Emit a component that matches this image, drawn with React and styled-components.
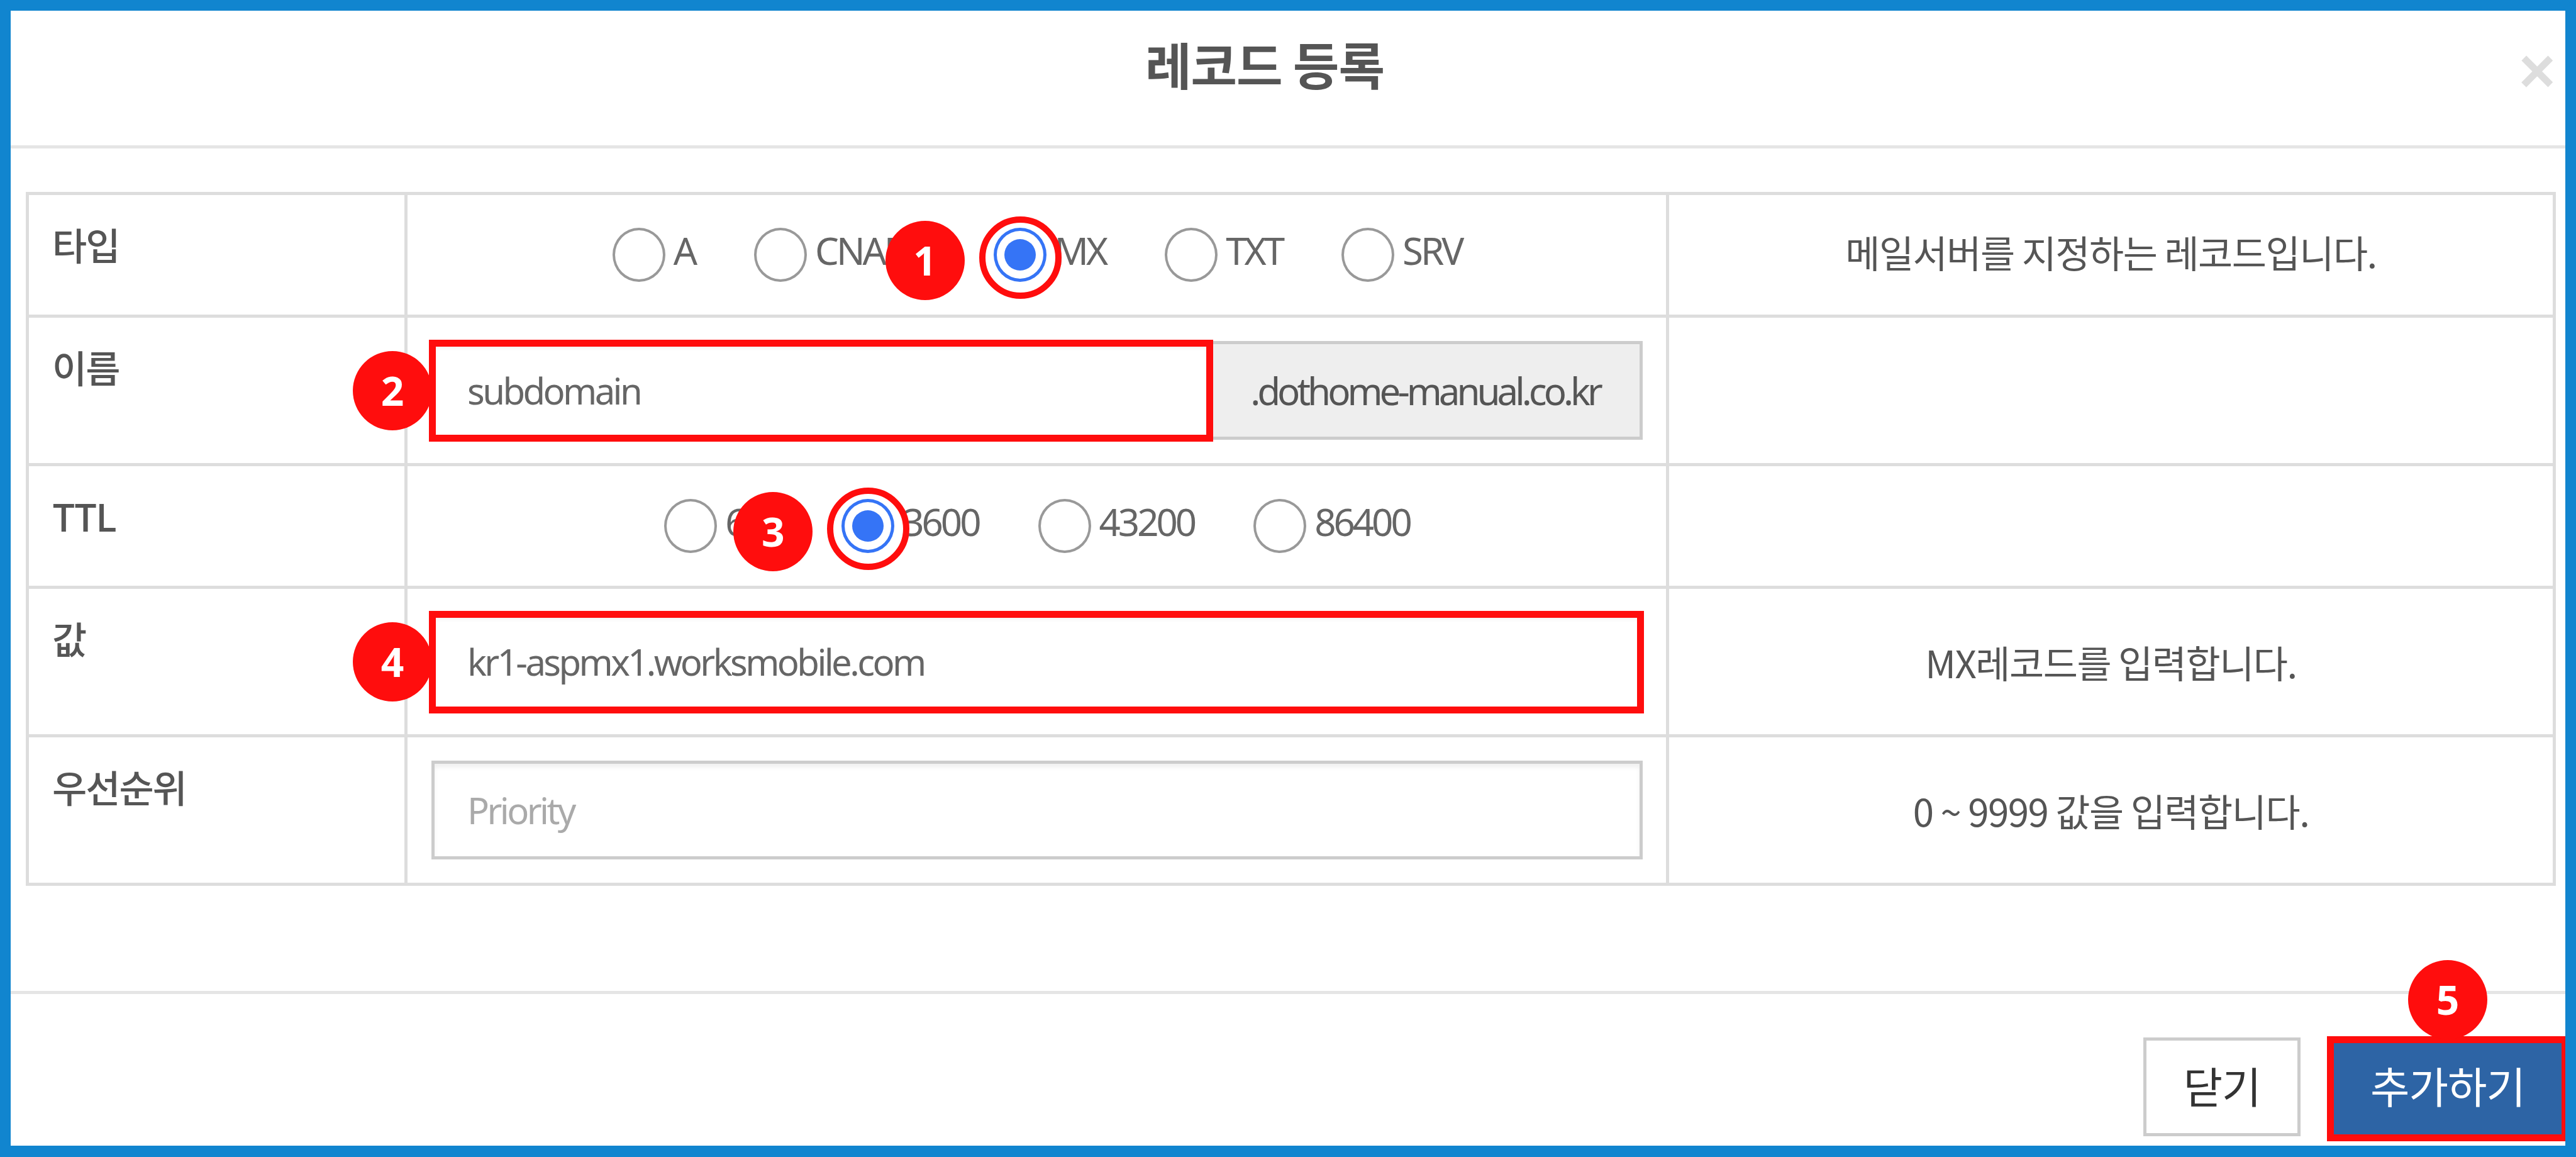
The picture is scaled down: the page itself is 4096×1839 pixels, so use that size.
import React from "react";
import styled, { createGlobalStyle } from "styled-components";

const Global = createGlobalStyle`
  html, body { margin: 0; padding: 0; background: #fff; }
  * { box-sizing: border-box; }
`;

const FONT = `"Noto Sans", "Noto Sans CJK KR", sans-serif`;
const KFONT = `"Noto Sans CJK KR", "Noto Sans", sans-serif`;
const RED = "#ff0d0d";

const Frame = styled.div`
  width: 4096px;
  height: 1839px;
  border: solid #1185cf;
  border-width: 17px 17px 18px 17px;
  background: #fff;
  display: flex;
  flex-direction: column;
  font-family: ${FONT};
  color: #555;
  overflow: hidden;
`;

const Header = styled.header`
  height: 219px;
  flex: none;
  border-bottom: 5px solid #e5e5e5;
  display: flex;
  align-items: flex-start;
  padding-right: 30px;
`;

const Title = styled.h4`
  flex: 1;
  margin: 0;
  padding-top: 35px;
  text-align: center;
  font: 700 80px/1.2 ${KFONT};
  color: #555;
  letter-spacing: -1px;
`;

const CloseIcon = styled.span`
  width: 44px;
  margin-top: 45px;
  text-align: center;
  font: 700 100px/1 "Liberation Sans", sans-serif;
  color: #ddd;
`;

const Body = styled.main`
  flex: 1;
  padding: 69px 15px 0 24px;
`;

const Table = styled.div`
  border-top: 5px solid #ddd;
  border-left: 5px solid #ddd;
`;

const Row = styled.div`
  display: grid;
  grid-template-columns: 602px 2006px 1410px;
  height: ${(p) => p.$h}px;
`;

const Cell = styled.div`
  border-right: 5px solid #ddd;
  border-bottom: 5px solid #ddd;
`;

const LabelCell = styled(Cell)`
  padding: 39px 0 0 37px;
  font: 500 60px/1.3 ${KFONT};
  color: #555;
  letter-spacing: -2px;
`;

const ControlCell = styled(Cell)`
  display: flex;
  align-items: center;
  justify-content: ${(p) => (p.$center ? "center" : "flex-start")};
  padding: 0 37px 0 38px;
`;

const NoteCell = styled(Cell)`
  display: flex;
  align-items: center;
  justify-content: center;
  font: 400 60px/1.2 ${KFONT};
  color: #555;
  letter-spacing: -1.5px;
  padding-bottom: ${(p) => p.$pb || 0}px;
`;

const RadioGroup = styled.div`
  display: flex;
  align-items: center;
  gap: 94px;
`;

const RadioItem = styled.label`
  display: flex;
  align-items: center;
  gap: 13px;
  font: 400 60px/1 ${FONT};
  letter-spacing: -4px;
  color: #666;
`;

const RadioMark = styled.span`
  position: relative;
  flex: none;
  width: 84px;
  height: 86px;
  border-radius: 50%;
  border: ${(p) => (p.$on ? "5px solid #3574f6" : "4px solid #999")};
  display: flex;
  align-items: center;
  justify-content: center;
  background: #fff;
`;

const RadioDot = styled.span`
  width: 50px;
  height: 50px;
  border-radius: 50%;
  background: #3574f6;
`;

const RadioText = styled.span`
  padding-bottom: 14px;
`;

const RingMark = styled.span`
  position: absolute;
  left: 50%;
  top: 50%;
  width: 131px;
  height: 131px;
  margin: -61px 0 0 -65px;
  border: 10px solid ${RED};
  border-radius: 50%;
  z-index: 2;
`;

const Badge = styled.span`
  position: absolute;
  width: 126px;
  height: 126px;
  border-radius: 50%;
  background: ${RED};
  color: #fff;
  font: 700 64px/126px ${FONT};
  letter-spacing: 0;
  text-align: center;
  z-index: 3;
  left: ${(p) => p.$left}px;
  top: ${(p) => p.$top};
`;

const Group = styled.div`
  position: relative;
  display: flex;
  flex: 1;
  height: 157px;
  margin-left: ${(p) => p.$ml || 0}px;
`;

const TextBox = styled.div`
  flex: 1;
  border: 5px solid #ccc;
  box-shadow: inset 0 6px 6px rgba(0, 0, 0, 0.06);
  display: flex;
  align-items: center;
  padding-left: 52px;
  font: 400 58px/1 ${FONT};
  letter-spacing: ${(p) => p.$ls || -3.6}px;
  color: ${(p) => (p.$placeholder ? "#aaa" : "#666")};
`;

const Addon = styled.div`
  width: 687px;
  flex: none;
  border: 5px solid #ccc;
  border-left: 0;
  background: #eee;
  display: flex;
  align-items: center;
  justify-content: center;
  font: 400 60px/1 ${FONT};
  letter-spacing: -5px;
  color: #555;
`;

const RedBox = styled.span`
  position: absolute;
  top: ${(p) => p.$t}px;
  bottom: ${(p) => p.$b}px;
  left: ${(p) => p.$l}px;
  right: ${(p) => p.$r}px;
  width: ${(p) => (p.$w ? `${p.$w}px` : "auto")};
  border: 11px solid ${RED};
  pointer-events: none;
  z-index: 2;
`;

const Footer = styled.footer`
  height: 246px;
  flex: none;
  border-top: 5px solid #e5e5e5;
  display: flex;
  justify-content: flex-end;
  gap: 47px;
  padding: 69px 0 0;
`;

const Button = styled.button`
  position: relative;
  height: 157px;
  width: ${(p) => p.$w}px;
  border: 5px solid ${(p) => (p.$primary ? "#2d64a5" : "#ccc")};
  background: ${(p) => (p.$primary ? "#2d64a5" : "#fff")};
  color: ${(p) => (p.$primary ? "#fff" : "#333")};
  font: 400 68px/1 ${KFONT};
  letter-spacing: -1px;
  padding: 0 0 6px;
  margin: 0;
`;

const Radio = ({ label, on, badge }) => (
  <RadioItem>
    <RadioMark $on={on}>
      {on && <RadioDot />}
      {on && <RingMark />}
      {on && (
        <Badge $left={-177} $top="-16px">
          {badge}
        </Badge>
      )}
    </RadioMark>
    <RadioText>{label}</RadioText>
  </RadioItem>
);

export default function App() {
  return (
    <>
      <Global />
      <Frame>
        <Header>
          <Title>레코드 등록</Title>
          <CloseIcon>×</CloseIcon>
        </Header>
        <Body>
          <Table>
            <Row $h={195}>
              <LabelCell>타입</LabelCell>
              <ControlCell $center>
                <RadioGroup>
                  <Radio label="A" />
                  <Radio label="CNAME" />
                  <Radio label="MX" on badge="1" />
                  <Radio label="TXT" />
                  <Radio label="SRV" />
                </RadioGroup>
              </ControlCell>
              <NoteCell $pb={10}>메일서버를 지정하는 레코드입니다.</NoteCell>
            </Row>
            <Row $h={236}>
              <LabelCell>이름</LabelCell>
              <ControlCell>
                <Group>
                  <TextBox>subdomain</TextBox>
                  <Addon>.dothome-manual.co.kr</Addon>
                  <Badge $left={-125} $top="-46px" style={{ top: 16 }}>
                    2
                  </Badge>
                  <RedBox $t={-2} $b={-3} $l={-4} $w={1247} />
                </Group>
              </ControlCell>
              <NoteCell />
            </Row>
            <Row $h={195}>
              <LabelCell>TTL</LabelCell>
              <ControlCell $center>
                <RadioGroup>
                  <Radio label="600" />
                  <Radio label="3600" on badge="3" />
                  <Radio label="43200" />
                  <Radio label="86400" />
                </RadioGroup>
              </ControlCell>
              <NoteCell />
            </Row>
            <Row $h={236}>
              <LabelCell>값</LabelCell>
              <ControlCell>
                <Group>
                  <TextBox>kr1-aspmx1.worksmobile.com</TextBox>
                  <Badge $left={-125} $top="16px">
                    4
                  </Badge>
                  <RedBox $t={-2} $b={-4} $l={-4} $r={-2} />
                </Group>
              </ControlCell>
              <NoteCell>MX레코드를 입력합니다.</NoteCell>
            </Row>
            <Row $h={236}>
              <LabelCell>우선순위</LabelCell>
              <ControlCell>
                <Group>
                  <TextBox $placeholder>Priority</TextBox>
                </Group>
              </ControlCell>
              <NoteCell>0 ~ 9999 값을 입력합니다.</NoteCell>
            </Row>
          </Table>
        </Body>
        <Footer>
          <Button $w={250}>닫기</Button>
          <Button $w={374} $primary>
            추가하기
            <RedBox $t={-7} $b={-13} $l={-10} $r={-10} />
            <Badge $left={119} $top="-128px">
              5
            </Badge>
          </Button>
        </Footer>
      </Frame>
    </>
  );
}
